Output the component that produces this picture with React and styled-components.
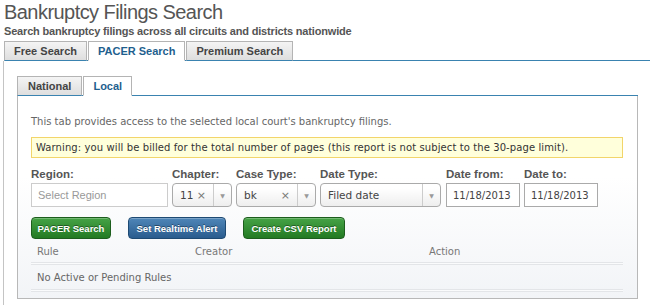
import React from "react";
import styled, { createGlobalStyle } from "styled-components";

const Global = createGlobalStyle`
  html, body { margin: 0; padding: 0; background: #fff; }
  body { font-family: "DejaVu Sans", Verdana, sans-serif; font-size: 10px; color: #555; }
  * { box-sizing: border-box; }
`;

const Page = styled.div`
  width: 650px;
  height: 305px;
  overflow: hidden;
  padding: 1px 0 0 4px;
`;

const Title = styled.h1`
  margin: 0;
  font-family: "Liberation Sans", Arial, sans-serif;
  font-weight: normal;
  font-size: 20px;
  letter-spacing: -0.55px;
  line-height: 23px;
  color: #555;
`;

const Subtitle = styled.div`
  font-family: "Liberation Sans", Arial, sans-serif;
  font-weight: bold;
  font-size: 11px;
  letter-spacing: -0.17px;
  line-height: 14px;
  color: #555;
`;

const TabBar = styled.div`
  display: flex;
  gap: 1px;
  border-bottom: 1px solid #3a83b0;
  margin-top: ${(p) => p.$top}px;
  width: ${(p) => p.$w || "auto"};
`;

const Tab = styled.div`
  height: 20px;
  padding: 0 ${(p) => p.$pad}px;
  display: flex;
  align-items: center;
  font-family: "Liberation Sans", Arial, sans-serif;
  font-weight: bold;
  font-size: 11px;
  border: 1px solid #b4b4b4;
  border-bottom: ${(p) => (p.$active ? "1px solid #fff" : "1px solid #3a83b0")};
  margin-bottom: -1px;
  color: ${(p) => (p.$active ? "#1f5f8e" : "#444")};
  background: ${(p) =>
    p.$active ? "#fff" : "linear-gradient(#f4f4f4, #dedede)"};
`;

const Outer = styled.div`
  border-left: 1px solid #c4c4c4;
  margin-left: -1px;
  padding: 15px 0 6px 13px;
  height: 250px;
`;

const Panel = styled.div`
  width: 621px;
  border: 1px solid #b8b8b8;
  border-top: none;
  background: linear-gradient(#fff 40%, #f2f4f7);
  padding: 19px 14px 8px 13px;
  height: 203px;
`;

const Intro = styled.p`
  margin: 0;
  font-size: 10px;
  line-height: 13px;
  color: #666;
`;

const Warning = styled.div`
  margin-top: 9px;
  width: 592px;
  height: 21px;
  background: #ffffdb;
  border: 1px solid #f2d56a;
  padding: 0 4px;
  display: flex;
  align-items: center;
  font-size: 10px;
  letter-spacing: 0.1px;
  color: #333;
`;

const Form = styled.div`
  display: flex;
  gap: 4px;
  margin-top: 10px;
`;

const Field = styled.div`
  display: flex;
  flex-direction: column;
  gap: 3px;
  width: ${(p) => p.$w}px;
  margin-left: ${(p) => p.$ml || 0}px;
`;

const Label = styled.label`
  font-family: "Liberation Sans", Arial, sans-serif;
  font-weight: bold;
  font-size: 11.5px;
  line-height: 12px;
  color: #555;
`;

const TextBox = styled.div`
  height: 24px;
  border: 1px solid ${(p) => (p.$placeholder ? "#ccc" : "#aaa")};
  background: #fff;
  display: flex;
  align-items: center;
  padding: 0 6px;
  font-size: ${(p) => (p.$placeholder ? 11 : 10)}px;
  color: ${(p) => (p.$placeholder ? "#999" : "#444")};
  font-family: ${(p) =>
    p.$placeholder ? '"Liberation Sans", Arial, sans-serif' : "inherit"};
`;

const Select = styled.div`
  height: 24px;
  border: 1px solid #aaa;
  border-radius: 4px;
  background: linear-gradient(#fff 20%, #eee);
  display: flex;
  align-items: center;
  font-size: 10.5px;
  color: #444;
`;

const SelValue = styled.span`
  flex: 1;
  padding-left: 7px;
`;

const Clear = styled.span`
  color: #777;
  font-size: 11px;
  padding-right: 7px;
`;

const Arrow = styled.span`
  width: 18px;
  height: 100%;
  border-left: 1px solid #ccc;
  display: flex;
  align-items: center;
  justify-content: center;
  color: #999;
  font-size: 6px;
`;

const Buttons = styled.div`
  display: flex;
  gap: 17px;
  margin-top: 10px;
`;

const Button = styled.button`
  height: 22px;
  padding: 0;
  width: ${(p) => p.$w}px;
  border-radius: 4px;
  border: 1px solid ${(p) => (p.$blue ? "#1e4a73" : "#1d5e1d")};
  background: ${(p) =>
    p.$blue
      ? "linear-gradient(#4f86b8, #2a5c8e)"
      : "linear-gradient(#46a346, #237a23)"};
  color: #fff;
  font-family: "Liberation Sans", Arial, sans-serif;
  font-weight: bold;
  font-size: 9.5px;
  text-shadow: 0 -1px 0 rgba(0, 0, 0, 0.4);
  box-shadow: inset 0 1px 0 rgba(255, 255, 255, 0.25);
`;

const Table = styled.div`
  margin-top: 6px;
  width: 592px;
`;

const Row = styled.div`
  display: grid;
  grid-template-columns: 158px 234px 1fr;
  height: 13px;
  align-items: center;
  padding-left: 6px;
  font-size: 10px;
  color: ${(p) => (p.$head ? "#777" : "#666")};
  margin-top: ${(p) => p.$mt}px;
`;

const Rule = styled.div`
  height: 3px;
  border-top: 1px solid #e3e5e8;
  border-bottom: 1px solid #e3e5e8;
  background: #fafbfc;
  margin-top: ${(p) => p.$mt}px;
`;

export default function App() {
  return (
    <Page>
      <Global />
      <Title>Bankruptcy Filings Search</Title>
      <Subtitle>Search bankruptcy filings across all circuits and districts nationwide</Subtitle>
      <TabBar $top={3}>
        <Tab $pad={9}>Free Search</Tab>
        <Tab $pad={9} $active>PACER Search</Tab>
        <Tab $pad={9}>Premium Search</Tab>
      </TabBar>
      <Outer>
        <TabBar $top={0} $w="621px">
          <Tab $pad={10}>National</Tab>
          <Tab $pad={9} $active>Local</Tab>
        </TabBar>
        <Panel>
          <Intro>This tab provides access to the selected local court's bankruptcy filings.</Intro>
          <Warning>
            Warning: you will be billed for the total number of pages (this report is not subject to the 30-page limit).
          </Warning>
          <Form>
            <Field $w={137}>
              <Label>Region:</Label>
              <TextBox $placeholder>Select Region</TextBox>
            </Field>
            <Field $w={60}>
              <Label>Chapter:</Label>
              <Select>
                <SelValue>11</SelValue>
                <Clear>×</Clear>
                <Arrow>▼</Arrow>
              </Select>
            </Field>
            <Field $w={80}>
              <Label>Case Type:</Label>
              <Select>
                <SelValue>bk</SelValue>
                <Clear>×</Clear>
                <Arrow>▼</Arrow>
              </Select>
            </Field>
            <Field $w={121}>
              <Label>Date Type:</Label>
              <Select>
                <SelValue>Filed date</SelValue>
                <Arrow>▼</Arrow>
              </Select>
            </Field>
            <Field $w={74} $ml={1}>
              <Label>Date from:</Label>
              <TextBox>11/18/2013</TextBox>
            </Field>
            <Field $w={74}>
              <Label>Date to:</Label>
              <TextBox>11/18/2013</TextBox>
            </Field>
          </Form>
          <Buttons>
            <Button $w={80}>PACER Search</Button>
            <Button $w={98} $blue>Set Realtime Alert</Button>
            <Button $w={102}>Create CSV Report</Button>
          </Buttons>
          <Table>
            <Row $head $mt={6}>
              <span>Rule</span>
              <span>Creator</span>
              <span>Action</span>
            </Row>
            <Rule $mt={4} />
            <Row $mt={6}>
              <span>No Active or Pending Rules</span>
            </Row>
            <Rule $mt={5} />
          </Table>
        </Panel>
      </Outer>
    </Page>
  );
}
